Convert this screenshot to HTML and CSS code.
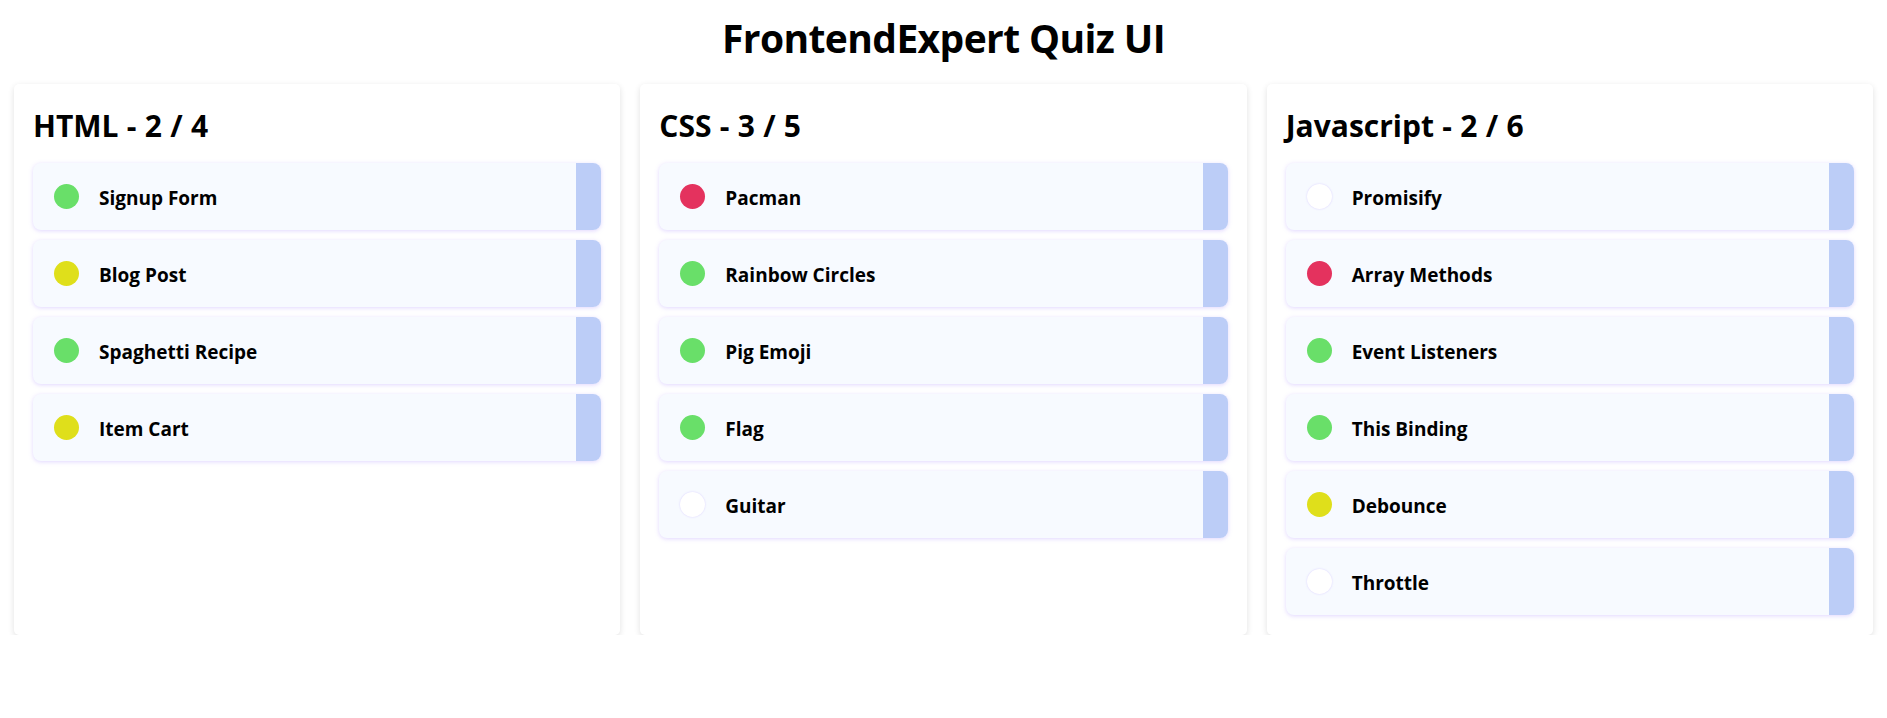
FILE: index.html
```html
<!DOCTYPE html>
<html lang="en">
<head>
<meta charset="utf-8">
<title>FrontendExpert Quiz UI</title>
<link rel="stylesheet" href="styles.css">
</head>
<body>
<h1 class="title">FrontendExpert Quiz UI</h1>
<div class="board">
  <section class="card">
    <h2 class="card-title">HTML - 2 / 4</h2>
    <ul class="list">
      <li class="item"><span class="dot green"></span><span class="name">Signup Form</span></li>
      <li class="item"><span class="dot yellow"></span><span class="name">Blog Post</span></li>
      <li class="item"><span class="dot green"></span><span class="name">Spaghetti Recipe</span></li>
      <li class="item"><span class="dot yellow"></span><span class="name">Item Cart</span></li>
    </ul>
  </section>
  <section class="card">
    <h2 class="card-title">CSS - 3 / 5</h2>
    <ul class="list">
      <li class="item"><span class="dot red"></span><span class="name">Pacman</span></li>
      <li class="item"><span class="dot green"></span><span class="name">Rainbow Circles</span></li>
      <li class="item"><span class="dot green"></span><span class="name">Pig Emoji</span></li>
      <li class="item"><span class="dot green"></span><span class="name">Flag</span></li>
      <li class="item"><span class="dot empty"></span><span class="name">Guitar</span></li>
    </ul>
  </section>
  <section class="card">
    <h2 class="card-title">Javascript - 2 / 6</h2>
    <ul class="list">
      <li class="item"><span class="dot empty"></span><span class="name">Promisify</span></li>
      <li class="item"><span class="dot red"></span><span class="name">Array Methods</span></li>
      <li class="item"><span class="dot green"></span><span class="name">Event Listeners</span></li>
      <li class="item"><span class="dot green"></span><span class="name">This Binding</span></li>
      <li class="item"><span class="dot yellow"></span><span class="name">Debounce</span></li>
      <li class="item"><span class="dot empty"></span><span class="name">Throttle</span></li>
    </ul>
  </section>
</div>
</body>
</html>
```

FILE: styles.css
```css
* { box-sizing: border-box; }

body {
  margin: 0;
  background: #ffffff;
  color: #000000;
  font-family: "Open Sans", "Noto Sans", sans-serif;
}

.title {
  margin: 14px 0 22px;
  font-size: 39px;
  line-height: 48px;
  letter-spacing: -0.6px;
  font-weight: 700;
  text-align: center;
}

.board {
  display: grid;
  grid-template-columns: repeat(3, 1fr);
  gap: 20px;
  padding: 0 14px;
}

.card {
  background: #ffffff;
  border-radius: 5px;
  box-shadow: 0 2px 6px rgba(0, 0, 0, 0.12);
  padding: 24px 19px 20px;
}

.card-title {
  margin: 0 0 19px;
  font-size: 30px;
  line-height: 36px;
  word-spacing: 0.5px;
  font-weight: 700;
}

.list {
  list-style: none;
  margin: 0;
  padding: 0;
  display: flex;
  flex-direction: column;
  gap: 10px;
}

.item {
  position: relative;
  display: flex;
  align-items: center;
  gap: 20px;
  height: 67px;
  padding-left: 21px;
  background: #f7faff;
  border-radius: 8px;
  overflow: hidden;
  box-shadow: 0 1px 4px rgba(170, 140, 255, 0.35);
}

.item::after {
  content: "";
  position: absolute;
  top: 0;
  right: 0;
  bottom: 0;
  width: 25px;
  background: #bccdf7;
}

.dot {
  flex: none;
  width: 25px;
  height: 25px;
  border-radius: 50%;
}

.green { background: #69df69; }
.yellow { background: #dfdf1b; }
.red { background: #e4325e; }
.empty {
  background: #ffffff;
  box-shadow: 0 0 2px rgba(170, 140, 255, 0.4);
}

.name {
  padding-top: 3px;
  font-size: 19px;
  font-weight: 700;
}
```
